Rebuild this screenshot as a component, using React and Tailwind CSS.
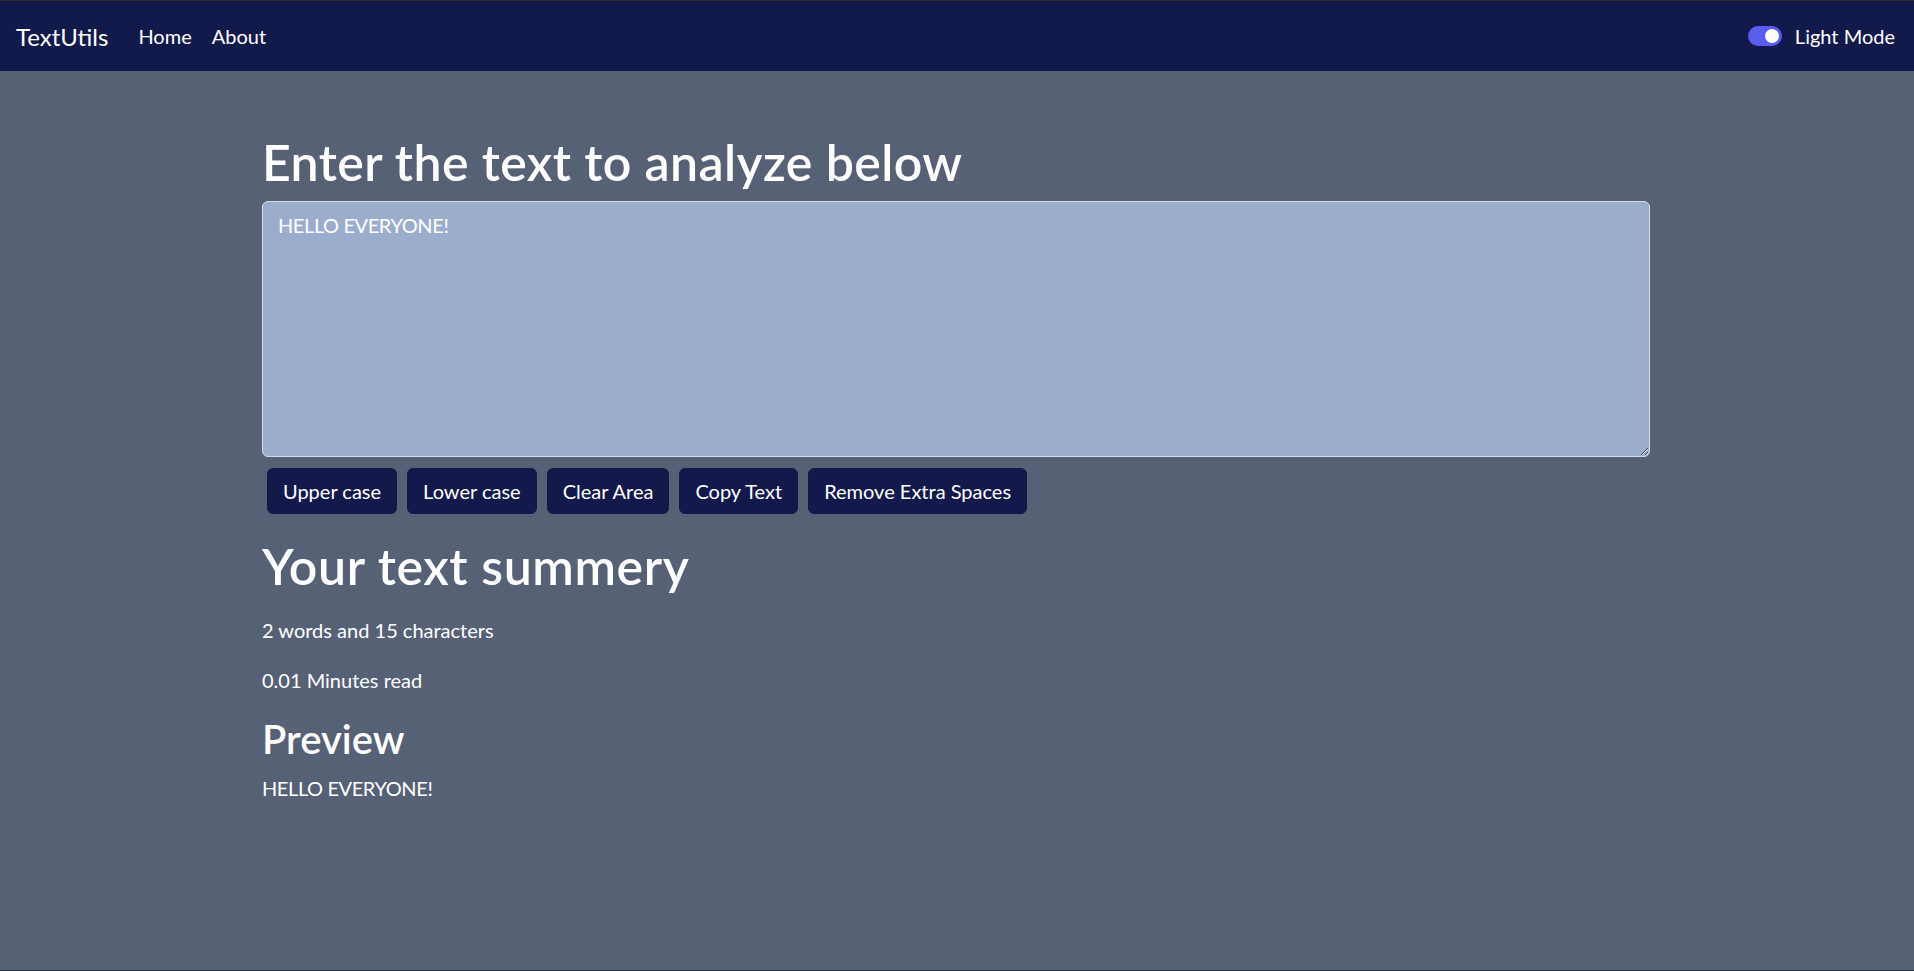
import React, { useState } from 'react';

const font = { fontFamily: 'Lato, "Open Sans", sans-serif' };

const Navbar = ({ dark, onToggle }) => {
    return (
        <nav className="h-[70px] bg-[#121a4b] flex items-center justify-between pl-4 pr-[19px] text-white">
            <div className="flex items-center">
                <a href="#" className="text-[24px] leading-[37px] mr-[20px]">TextUtils</a>
                <a href="#" className="text-[20px] leading-[30px] px-[10px]">Home</a>
                <a href="#" className="text-[20px] leading-[30px] px-[10px]">About</a>
            </div>
            <label className="flex items-center gap-[13px] cursor-pointer">
                <button
                    onClick={onToggle}
                    className="relative w-[34px] h-[20px] rounded-full bg-[#5a5cf2]"
                >
                    <span className="absolute right-[3px] top-[3px] w-[14px] h-[14px] rounded-full bg-white" />
                </button>
                <span className="text-[20px] leading-[30px]">{dark ? 'Light Mode' : 'Dark Mode'}</span>
            </label>
        </nav>
    );
};

const buttons = ['Upper case', 'Lower case', 'Clear Area', 'Copy Text', 'Remove Extra Spaces'];

export default function App() {
    const [text, setText] = useState('HELLO EVERYONE!');
    const words = text.split(/\s+/).filter((w) => w.length !== 0).length;

    return (
        <div style={font} className="min-h-[971px] bg-[#566176] border-t border-b border-[#2e2e2e] flex flex-col">
            <Navbar dark={true} onToggle={() => {}} />
            <main className="w-[1388px] ml-[262px] text-white">
                <h1 className="mt-[61px] text-[50px] leading-[60px] font-semibold tracking-[0.4px]">Enter the text to analyze below</h1>
                <textarea
                    value={text}
                    onChange={(e) => setText(e.target.value)}
                    className="mt-[9px] block w-full h-[256px] bg-[#9badcd] text-white border border-[#d6dce6] rounded-[6px] px-[15px] py-[8px] text-[20px] leading-[30px] tracking-[-0.4px] outline-none"
                />
                <div className="mt-[11px] flex gap-[10px] pl-[5px]">
                    {buttons.map((b) => (
                        <button
                            key={b}
                            className="h-[46px] px-[15px] bg-[#131a4b] border border-[#131a4b] rounded-[6px] text-[20px] leading-[30px] text-white"
                        >
                            {b}
                        </button>
                    ))}
                </div>
                <h1 className="mt-[22px] text-[50px] leading-[60px] font-semibold tracking-[0.6px]">Your text summery</h1>
                <p className="mt-[19px] text-[20px] leading-[30px]">{words} words and {text.length} characters</p>
                <p className="mt-[20px] text-[20px] leading-[30px]">{(0.005 * words).toFixed(2)} Minutes read</p>
                <h2 className="mt-[20px] text-[40px] leading-[48px] font-semibold">Preview</h2>
                <p className="mt-[10px] text-[20px] leading-[30px] tracking-[-0.4px]">{text}</p>
            </main>
        </div>
    );
}
